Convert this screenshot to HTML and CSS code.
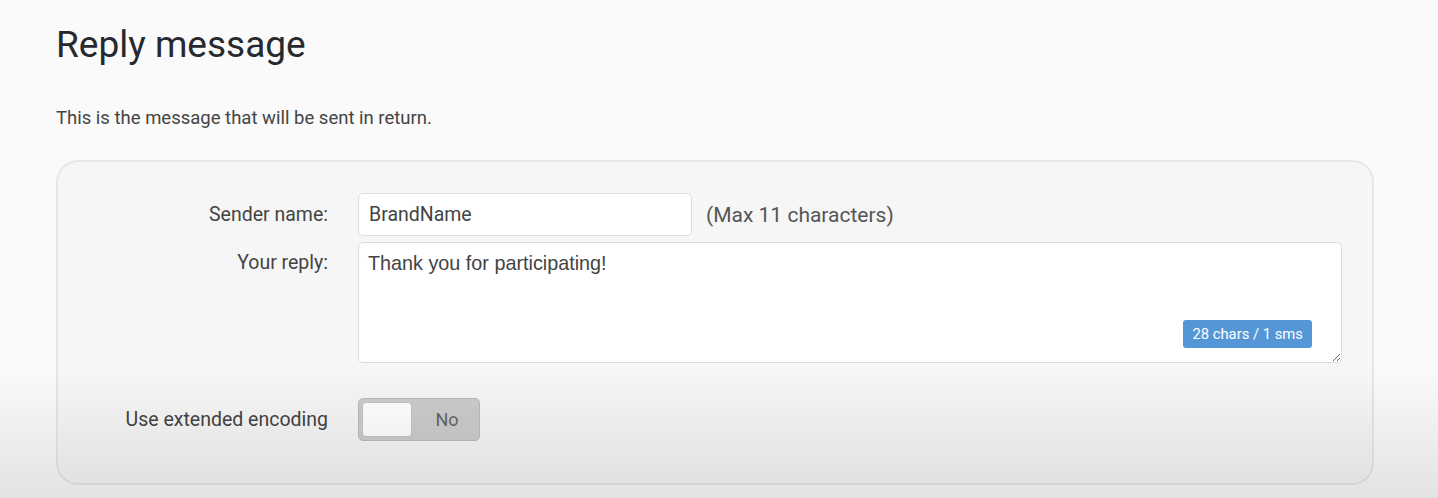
FILE: index.html
```html
<!DOCTYPE html>
<html lang="en">
<head>
  <meta charset="UTF-8" />
  <meta name="viewport" content="width=device-width, initial-scale=1.0"/>
  <title>Reply message</title>
  <link rel="stylesheet" href="styles.css">
</head>
<body>

  <div class="page">
    <h1>Reply message</h1>
    <p class="intro">This is the message that will be sent in return.</p>

    <div class="panel">
      <div class="row">
        <label class="label" for="sender">Sender name:</label>
        <div class="field">
          <input type="text" id="sender" value="BrandName" />
          <span class="hint">(Max 11 characters)</span>
        </div>
      </div>

      <div class="row top">
        <label class="label" for="reply">Your reply:</label>
        <div class="field reply-wrap">
          <textarea id="reply">Thank you for participating!</textarea>
          <span class="counter">28 chars / 1 sms</span>
        </div>
      </div>

      <div class="row toggle-row">
        <span class="label">Use extended encoding</span>
        <div class="field">
          <div class="toggle">
            <span class="knob"></span>
            <span class="toggle-text">No</span>
          </div>
        </div>
      </div>
    </div>
  </div>

  <div class="fade"></div>

</body>
</html>
```

FILE: styles.css
```css
body {
  margin: 0;
  font-family: Roboto, Arial, sans-serif;
  background-color: #fafafa;
  color: #444;
}
.page {
  padding: 23px 64px 0 56px;
}
h1 {
  margin: 0;
  font-size: 37px;
  font-weight: 400;
  color: #26292e;
}
.intro {
  margin: 41px 0 0;
  font-size: 18.5px;
  color: #444;
}
.panel {
  margin-top: 31px;
  background: #f6f6f6;
  border: 2px solid #e7e7e7;
  border-radius: 22px;
  padding: 31px 30px 42px 0;
}
.row {
  display: grid;
  grid-template-columns: 270px 1fr;
  column-gap: 30px;
  align-items: center;
  margin-bottom: 6px;
}
.row.top {
  align-items: start;
}
.row.top .label {
  padding-top: 9px;
}
.toggle-row {
  margin: 35px 0 0;
}
.label {
  text-align: right;
  font-size: 19.5px;
  color: #444;
}
.field {
  display: flex;
  align-items: center;
  gap: 14px;
}
input {
  width: 334px;
  height: 43px;
  box-sizing: border-box;
  padding: 0 10px;
  border: 1px solid #dcdcdc;
  border-radius: 5px;
  font-family: Roboto, Arial, sans-serif;
  font-size: 19.5px;
  color: #444;
  background: white;
}
.hint {
  font-size: 21px;
  color: #555;
}
.reply-wrap {
  position: relative;
}
textarea {
  width: 100%;
  height: 121px;
  box-sizing: border-box;
  padding: 9px 9px;
  border: 1px solid #dcdcdc;
  border-radius: 5px;
  font-family: "Liberation Sans", Arial, sans-serif;
  font-size: 19.8px;
  color: #444;
  background: white;
  resize: both;
}
.counter {
  position: absolute;
  right: 30px;
  bottom: 15px;
  background-color: #5597d6;
  color: white;
  font-size: 14.8px;
  padding: 5px 9px;
  border-radius: 3px;
}
.toggle {
  display: flex;
  align-items: center;
  width: 122px;
  height: 43px;
  box-sizing: border-box;
  padding: 3px;
  background: #cccccc;
  border: 1px solid #b9b9b9;
  border-radius: 5px;
}
.knob {
  width: 50px;
  height: 35px;
  box-sizing: border-box;
  background: white;
  border: 1px solid #c4c4c4;
  border-radius: 4px;
}
.toggle-text {
  flex: 1;
  padding-left: 6px;
  text-align: center;
  font-size: 18px;
  color: #666;
}
.fade {
  position: fixed;
  left: 0;
  right: 0;
  bottom: 0;
  height: 130px;
  background: linear-gradient(to bottom, rgba(0,0,0,0), rgba(0,0,0,0.09));
  pointer-events: none;
}
```
